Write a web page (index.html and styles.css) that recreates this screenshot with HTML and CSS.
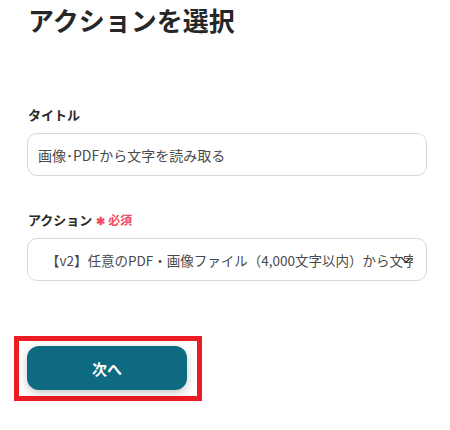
FILE: index.html
```
<!DOCTYPE html>
<html lang="ja">
<head>
<meta charset="utf-8">
<link rel="stylesheet" href="styles.css">
</head>
<body>
<div class="page">
  <h1 class="title">アクションを選択</h1>
  <div class="field field-first">
    <div class="label">タイトル</div>
    <div class="input">画像･PDFから文字を読み取る</div>
  </div>
  <div class="field">
    <div class="label">アクション<span class="req"><span class="star">✱</span>必須</span></div>
    <div class="select">
      <div class="select-text">【v2】任意のPDF・画像ファイル（4,000文字以内）から文字情報を読み取る</div>
      <svg class="chev" width="10" height="7" viewBox="0 0 10 7"><path d="M1 1.2 L5 5.2 L9 1.2" fill="none" stroke="#333" stroke-width="1.4" stroke-linecap="round" stroke-linejoin="round"/></svg>
    </div>
  </div>
  <div class="cta-frame">
    <button class="btn">次へ</button>
  </div>
</div>
</body>
</html>
```
FILE: styles.css
```
* { box-sizing: border-box; }
html, body { margin: 0; padding: 0; background: #fff; }
body { font-family: "Noto Sans CJK JP", "Noto Sans", sans-serif; color: #2a2a2a; }
.page { padding: 2px 23px 0 27px; width: 450px; }
.title { margin: 0; font-size: 26px; line-height: 36px; font-weight: 700; color: #262626; padding-left: 1px; }
.field { display: flex; flex-direction: column; gap: 8px; width: 400px; }
.field-first { margin-top: 67px; }
.field + .field { margin-top: 34px; }
.label { font-size: 13px; line-height: 20px; font-weight: 700; color: #2a2a2a; padding-left: 1px; display: flex; align-items: center; }
.req { color: #f04a5e; font-size: 12px; font-weight: 700; margin-left: 4px; display: inline-flex; align-items: center; }
.star { font-size: 11px; margin-right: 3px; }
.input, .select { height: 43px; border: 1px solid #d3d7de; border-radius: 10px; display: flex; align-items: center; font-size: 14px; color: #4a4a4a; background: #fff; }
.input { padding-left: 10px; }
.select { position: relative; padding-left: 18px; padding-right: 13px; overflow: hidden; font-size: 13.5px; }
.select-text { white-space: nowrap; overflow: hidden; flex: 1; }
.chev { position: absolute; right: 15px; top: 18px; }
.cta-frame { display: inline-block; margin-top: 55px; margin-left: -13px; border: 5px solid #ec1c24; padding: 5px 10px 6px 8px; }
.btn { display: block; width: 160px; height: 44px; border: none; border-radius: 12px; background: #0d6a81; color: #fff; font-family: "Noto Sans CJK JP", sans-serif; font-size: 15px; font-weight: 700; box-shadow: 0 3px 8px rgba(0, 0, 0, 0.22); }
```
